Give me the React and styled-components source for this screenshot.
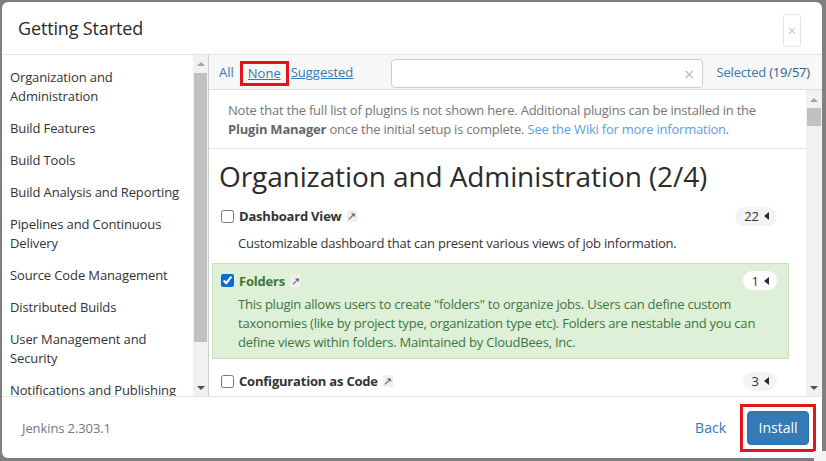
import React from "react";
import styled, { createGlobalStyle } from "styled-components";

const FONT = `"Open Sans", "Noto Sans", "Liberation Sans", sans-serif`;

const GlobalStyle = createGlobalStyle`
  html, body { margin: 0; padding: 0; }
  body { background: #7f7f7f; font-family: ${FONT}; color: #333; }
  * { box-sizing: border-box; }
`;

const Page = styled.div`
  width: 826px;
  height: 461px;
  padding: 2px 4px 3px 2px;
  display: flex;
  position: relative;
`;

const Dialog = styled.div`
  flex: 1;
  background: #fff;
  border-radius: 6px;
  display: flex;
  flex-direction: column;
  overflow: hidden;
`;

const Header = styled.div`
  height: 53px;
  flex: none;
  display: flex;
  align-items: center;
  justify-content: space-between;
  padding: 0 21px 0 16px;
  border-bottom: 1px solid #e5e5e5;
`;

const Title = styled.h4`
  margin: 0;
  font-size: 18px;
  font-weight: 400;
  letter-spacing: -0.15px;
  color: #2b2b2b;
`;

const CloseBtn = styled.button`
  width: 18px;
  height: 33px;
  margin-top: 5px;
  padding: 0;
  border: 1px solid #e6e6e6;
  border-radius: 3px;
  background: #fff;
  color: #c8c8c8;
  font-size: 15px;
  font-family: ${FONT};
  line-height: 1;
`;

const Body = styled.div`
  flex: 1;
  display: flex;
  min-height: 0;
`;

const Sidebar = styled.div`
  width: 207px;
  flex: none;
  display: flex;
  border-right: 1px solid #cfcfcf;
`;

const CatList = styled.ul`
  list-style: none;
  margin: 0;
  padding: 6px 0 0 8px;
  flex: 1;
  overflow: hidden;
`;

const CatItem = styled.li`
  font-size: 13px;
  line-height: 19px;
  letter-spacing: -0.12px;
  padding: 6.5px 0;
  color: #333;
  white-space: nowrap;
`;

const Track = styled.div`
  width: ${(p) => p.$w || 15}px;
  flex: none;
  background: #f1f1f1;
  display: flex;
  flex-direction: column;
  align-items: stretch;
  padding-top: ${(p) => p.$pt || 0}px;
`;

const Arrow = styled.div`
  height: ${(p) => p.$h || 17}px;
  flex: none;
  display: flex;
  align-items: center;
  justify-content: center;
  &::after {
    content: "";
    border-left: 4px solid transparent;
    border-right: 4px solid transparent;
    ${(p) => (p.$down ? "border-top: 4px solid #505050;" : "border-bottom: 4px solid #a3a3a3;")}
  }
`;

const ThumbArea = styled.div`
  flex: 1;
  padding: 1px 1px;
  display: flex;
  flex-direction: column;
`;

const Thumb = styled.div`
  height: ${(p) => p.$h}px;
  background: #c1c1c1;
`;

const Main = styled.div`
  flex: 1;
  display: flex;
  flex-direction: column;
  min-width: 0;
`;

const Toolbar = styled.div`
  height: 35px;
  flex: none;
  background: #f7f7f7;
  border-bottom: 1px solid #dcdcdc;
  display: flex;
  align-items: center;
  padding: 0 12px 0 10px;
  font-size: 13px;
`;

const Link = styled.a`
  color: #337ab7;
  text-decoration: ${(p) => (p.$u ? "underline" : "none")};
  cursor: pointer;
`;

const Marked = styled.span`
  display: inline-block;
  border: 3px solid #e5131c;
  padding: 0 5px;
  line-height: 19px;
  margin: 3px 2px 0 6px;
`;

const SearchBox = styled.div`
  margin-left: 38px;
  width: 312px;
  height: 29px;
  margin-top: 3px;
  border: 1px solid #ccc;
  border-radius: 4px;
  background: #fff;
  display: flex;
  align-items: center;
  justify-content: flex-end;
  padding-right: 8px;
  color: #bbb;
  font-size: 18px;
`;

const Selected = styled.span`
  margin-left: auto;
  color: #337ab7;
  letter-spacing: -0.2px;
  span { color: #2b5c95; }
`;

const ContentRow = styled.div`
  flex: 1;
  display: flex;
  min-height: 0;
`;

const Scroller = styled.div`
  flex: 1;
  overflow: hidden;
`;

const Note = styled.p`
  margin: 0;
  padding: 11px 19px 9px 19px;
  border-bottom: 1px solid #e3e3e3;
  font-size: 13px;
  line-height: 19px;
  letter-spacing: -0.22px;
  color: #767676;
  b { color: #666; }
`;

const WikiLink = styled.a`
  color: #5c9fd6;
`;

const Heading = styled.h2`
  margin: 9px 0 4px 10px;
  font-size: 28px;
  line-height: 36px;
  font-weight: 400;
  letter-spacing: -0.1px;
  color: #2b2b2b;
`;

const Plugins = styled.div`
  padding: 0 17px 0 3px;
  display: flex;
  flex-direction: column;
  gap: 4px;
`;

const Plugin = styled.div`
  padding: 7px 11px ${(p) => (p.$on ? 6 : 5)}px 8px;
  border: 1px solid ${(p) => (p.$on ? "#c9e4bc" : "transparent")};
  background: ${(p) => (p.$on ? "#dff0d8" : "transparent")};
  color: ${(p) => (p.$on ? "#3c763d" : "#333")};
`;

const PluginTop = styled.div`
  display: flex;
  align-items: center;
  height: 20px;
`;

const Check = styled.input`
  width: 13px;
  height: 13px;
  margin: 0 5px 0 0;
  accent-color: #0b6bd8;
`;

const Name = styled.span`
  font-weight: 700;
  font-size: 13px;
  letter-spacing: -0.2px;
`;

const Ext = styled.span`
  display: inline-block;
  margin-left: 5px;
  width: 10px;
  height: 12px;
  background: #f0f0f0;
  color: #555;
  font-size: 11px;
  line-height: 12px;
  text-align: center;
`;

const Badge = styled.span`
  margin-left: auto;
  height: 19px;
  padding: 0 8px 0 9px;
  border-radius: 10px;
  background: ${(p) => (p.$on ? "#fff" : "#f4f4f4")};
  display: flex;
  align-items: center;
  gap: 5px;
  font-size: 13px;
  color: #333;
  &::after {
    content: "";
    border-top: 4px solid transparent;
    border-bottom: 4px solid transparent;
    border-right: 5px solid #2a2a2a;
  }
`;

const Desc = styled.div`
  margin-top: ${(p) => (p.$on ? 4.5 : 7.5)}px;
  padding-left: 17px;
  font-size: 13px;
  line-height: 19px;
  letter-spacing: -0.22px;
`;

const Footer = styled.div`
  height: 62px;
  flex: none;
  border-top: 1px solid #e5e5e5;
  display: flex;
  align-items: center;
  padding: 0 6px 0 20px;
`;

const Version = styled.span`
  font-size: 13px;
  color: #777;
  letter-spacing: -0.1px;
`;

const Back = styled.a`
  margin-left: auto;
  font-size: 14px;
  color: #337ab7;
  margin-right: 14px;
`;

const Highlight = styled.span`
  display: inline-flex;
  padding: 4px;
  border: 3px solid #e5131c;
`;

const Install = styled.button`
  width: 62px;
  height: 34px;
  border: 1px solid #2e6da4;
  border-radius: 4px;
  background: #337ab7;
  color: #fff;
  font-family: ${FONT};
  font-size: 14px;
`;

const Corner = styled.div`
  position: absolute;
  right: 0;
  bottom: 0;
  width: 12px;
  height: 10px;
  background: #f3f3f3;
`;

const categories = [
  ["Organization and", "Administration"],
  ["Build Features"],
  ["Build Tools"],
  ["Build Analysis and Reporting"],
  ["Pipelines and Continuous", "Delivery"],
  ["Source Code Management"],
  ["Distributed Builds"],
  ["User Management and", "Security"],
  ["Notifications and Publishing"],
];

const plugins = [
  {
    name: "Dashboard View",
    count: 22,
    on: false,
    desc: ["Customizable dashboard that can present various views of job information."],
  },
  {
    name: "Folders",
    count: 1,
    on: true,
    desc: [
      'This plugin allows users to create "folders" to organize jobs. Users can define custom',
      "taxonomies (like by project type, organization type etc). Folders are nestable and you can",
      "define views within folders. Maintained by CloudBees, Inc.",
    ],
  },
  {
    name: "Configuration as Code",
    count: 3,
    on: false,
    desc: ["Allows Jenkins to be configured via YAML."],
  },
];

const Lines = ({ lines }) =>
  lines.map((l, i) => (
    <React.Fragment key={i}>
      {i > 0 && <br />}
      {l}
    </React.Fragment>
  ));

export default function App() {
  return (
    <Page>
      <GlobalStyle />
      <Dialog>
        <Header>
          <Title>Getting Started</Title>
          <CloseBtn>×</CloseBtn>
        </Header>
        <Body>
          <Sidebar>
            <CatList>
              {categories.map((c) => (
                <CatItem key={c.join(" ")}>
                  <Lines lines={c} />
                </CatItem>
              ))}
            </CatList>
            <Track>
              <Arrow />
              <ThumbArea>
                <Thumb $h={269} />
              </ThumbArea>
              <Arrow $down />
            </Track>
          </Sidebar>
          <Main>
            <Toolbar>
              <Link>All</Link>
              <Marked>
                <Link $u>None</Link>
              </Marked>
              <Link $u>Suggested</Link>
              <SearchBox>×</SearchBox>
              <Selected>
                Selected <span>(19/57)</span>
              </Selected>
            </Toolbar>
            <ContentRow>
              <Scroller>
                <Note>
                  Note that the full list of plugins is not shown here. Additional plugins can be installed in the
                  <br />
                  <b>Plugin Manager</b> once the initial setup is complete.{" "}
                  <WikiLink>See the Wiki for more information</WikiLink>.
                </Note>
                <Heading>Organization and Administration (2/4)</Heading>
                <Plugins>
                  {plugins.map((p) => (
                    <Plugin key={p.name} $on={p.on}>
                      <PluginTop>
                        <Check type="checkbox" defaultChecked={p.on} />
                        <Name>{p.name}</Name>
                        <Ext>↗</Ext>
                        <Badge $on={p.on}>{p.count}</Badge>
                      </PluginTop>
                      <Desc $on={p.on}>
                        <Lines lines={p.desc} />
                      </Desc>
                    </Plugin>
                  ))}
                </Plugins>
              </Scroller>
              <Track $w={16} $pt={2}>
                <Arrow $h={15} />
                <ThumbArea>
                  <Thumb $h={18} />
                </ThumbArea>
                <Arrow $down $h={16} />
              </Track>
            </ContentRow>
          </Main>
        </Body>
        <Footer>
          <Version>Jenkins 2.303.1</Version>
          <Back>Back</Back>
          <Highlight>
            <Install>Install</Install>
          </Highlight>
        </Footer>
      </Dialog>
      <Corner />
    </Page>
  );
}
